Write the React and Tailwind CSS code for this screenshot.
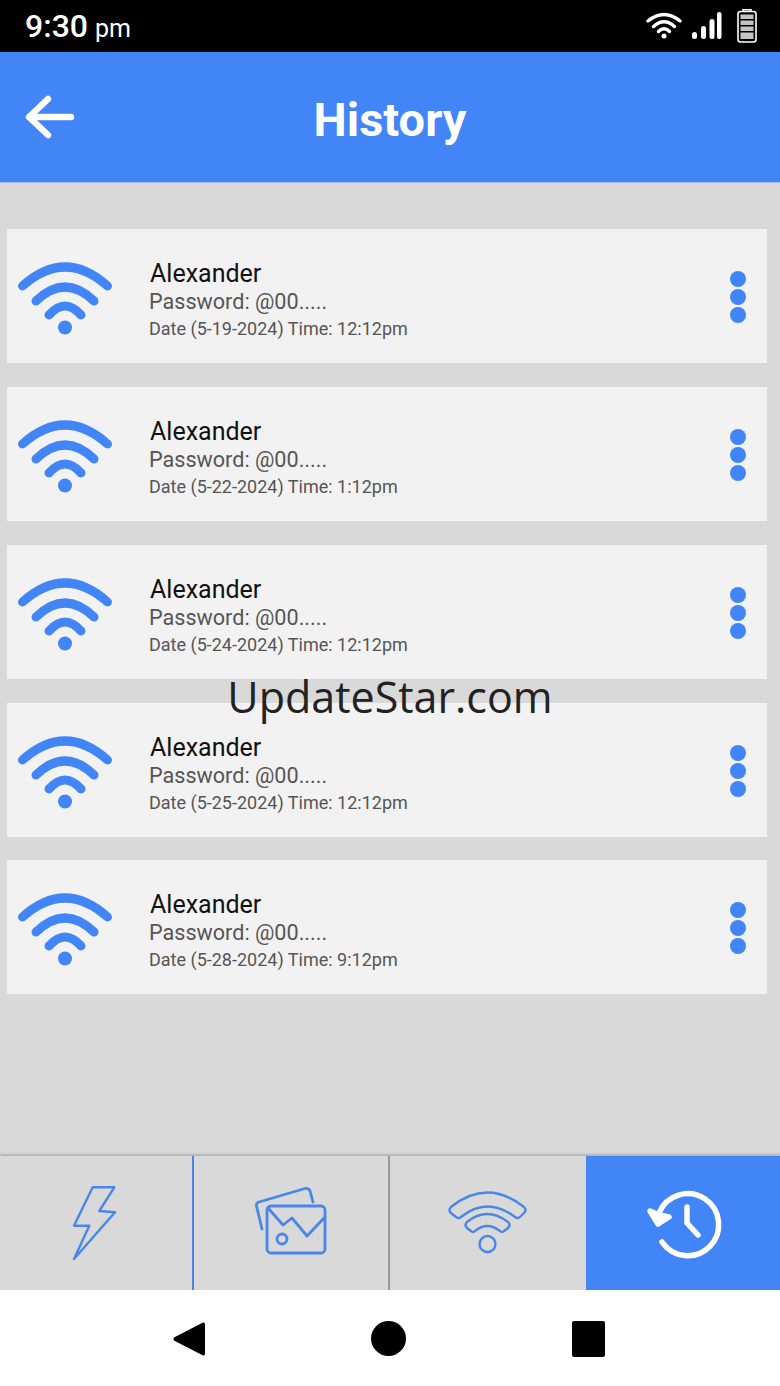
import React from "react";

const rows = [
  { date: "Date (5-19-2024) Time: 12:12pm", m: "mt-[47px]" },
  { date: "Date (5-22-2024) Time: 1:12pm", m: "mt-[24px]" },
  { date: "Date (5-24-2024) Time: 12:12pm", m: "mt-[24px]" },
  { date: "Date (5-25-2024) Time: 12:12pm", m: "mt-[24px]" },
  { date: "Date (5-28-2024) Time: 9:12pm", m: "mt-[23px]" },
];

function WifiSolid() {
  return (
    <svg width="100" height="80" viewBox="0 0 100 80" fill="none" stroke="#4285f6" strokeWidth="9" strokeLinecap="round">
      <path d="M7.5 30Q50 -8 92.5 30" />
      <path d="M21 45Q50 17 79 45" />
      <path d="M34 59Q50 41 66 59" />
      <circle cx="50" cy="71.5" r="7" fill="#4285f6" stroke="none" />
    </svg>
  );
}

function Card({ date, m }) {
  return (
    <div className={`${m} ml-[7px] mr-[13px] h-[134px] bg-[#f3f2f3] flex items-center pl-[8px] pr-[21px]`}>
      <WifiSolid />
      <div className="ml-[34px] mt-[8px] flex-1 flex flex-col font-['Roboto',sans-serif]">
        <div className="text-[25px] leading-[30px] text-[#111111] pl-px">Alexander</div>
        <div className="text-[21.6px] leading-[27px] mt-[-1px] text-[#555555]">Password: @00.....</div>
        <div className="text-[18px] leading-[26px] mt-[1px] text-[#555555]">{date}</div>
      </div>
      <div className="mt-[2px] flex flex-col gap-[2px]">
        <span className="w-[16px] h-[16px] rounded-full bg-[#4285f6]" />
        <span className="w-[16px] h-[16px] rounded-full bg-[#4285f6]" />
        <span className="w-[16px] h-[16px] rounded-full bg-[#4285f6]" />
      </div>
    </div>
  );
}

export default function App() {
  return (
    <div className="relative w-[780px] h-[1386px] flex flex-col bg-[#d9d9d9] overflow-hidden font-['Roboto',sans-serif]">
      <div className="h-[52px] bg-black flex items-center justify-between pl-[25px] pr-[23px] text-white">
        <div className="flex items-baseline gap-[7px] font-medium">
          <span className="text-[32px] leading-none">9:30</span>
          <span className="text-[25px] leading-none font-normal">pm</span>
        </div>
        <div className="flex items-center">
          <svg width="36" height="28" viewBox="0 0 36 28" fill="none" stroke="white" strokeWidth="3.4" strokeLinecap="round" className="mr-[9px] mt-[-2px]">
            <path d="M2 10Q18 -3 34 10" />
            <path d="M7.5 15.5Q18 6 28.5 15.5" />
            <path d="M12.5 20.5Q18 15 23.5 20.5" />
            <circle cx="18" cy="25" r="2.5" fill="white" stroke="none" />
          </svg>
          <svg width="32" height="28" viewBox="0 0 32 28" className="mr-[14px]">
            <rect x="1" y="20" width="5" height="7" rx="2.5" fill="white" />
            <rect x="10" y="14" width="5" height="13" rx="2.5" fill="white" />
            <rect x="18.5" y="7" width="5" height="20" rx="2.5" fill="white" />
            <rect x="26" y="0" width="4.5" height="27" rx="2.2" fill="white" />
          </svg>
          <svg width="20" height="34" viewBox="0 0 20 34" fill="none" stroke="white">
            <path d="M6 2V0.8H14V2" strokeWidth="1.5" />
            <rect x="1" y="2.5" width="18" height="30.5" rx="2.5" strokeWidth="1.6" />
            <rect x="3.5" y="5.5" width="13" height="4.5" fill="#c4c4c4" stroke="none" />
            <rect x="3.5" y="11.5" width="13" height="4.5" fill="#c4c4c4" stroke="none" />
            <rect x="3.5" y="17.5" width="13" height="4.5" fill="#c4c4c4" stroke="none" />
            <rect x="3.5" y="23.5" width="13" height="6.5" fill="#c4c4c4" stroke="none" />
          </svg>
        </div>
      </div>

      <div className="relative h-[130px] bg-[#4285f6] flex items-center justify-center shadow-[0_1px_0_rgba(66,133,246,0.35)]">
        <svg width="50" height="44" viewBox="0 0 50 44" fill="none" stroke="white" strokeWidth="6.5" strokeLinecap="round" strokeLinejoin="round" className="absolute left-[25px] top-[43px]">
          <path d="M46 22H5" />
          <path d="M23 4L4 22L23 40" />
        </svg>
        <span className="mt-[4px] text-[47px] leading-none font-bold text-white">History</span>
      </div>

      {rows.map((r) => (
        <Card key={r.date} date={r.date} m={r.m} />
      ))}

      <div className="flex-1" />

      <div className="h-[134px] flex bg-[#d9d9d9] shadow-[0_-2px_2px_rgba(0,0,0,0.18)]">
        <div className="w-[192px] flex items-center justify-center">
          <svg width="60" height="90" viewBox="0 0 60 90" fill="none" stroke="#4a86e8" strokeWidth="2.4" strokeLinejoin="round">
            <path d="M26.7 9.3H48.3L33.3 33L49 34.3L8 81L23.3 47.7H8Z" />
          </svg>
        </div>
        <div className="w-[2px] bg-[#4a86e8]" />
        <div className="w-[194px] flex items-center justify-center">
          <svg width="90" height="90" viewBox="0 0 90 90" fill="none" stroke="#4a86e8" strokeWidth="2.8" strokeLinecap="round" strokeLinejoin="round">
            <rect x="21" y="28" width="58" height="47" rx="4" />
            <path d="M22 30L37 47L46 40L61 58L79 39" />
            <circle cx="36" cy="61" r="5" />
            <path d="M16 51L10.5 28Q10 25 13 24L59 10.5Q63 10 64 13L67 24" />
          </svg>
        </div>
        <div className="w-[2px] bg-[#9a9a9a]" />
        <div className="w-[196px] flex items-center justify-center">
          <svg width="90" height="90" viewBox="0 0 90 90" fill="none" stroke="#4a86e8" strokeWidth="2.4" strokeLinejoin="round">
            <path d="M8 29Q44 0 81 29Q84 32 81 35L77 39Q75 41 72 39Q44 18 18 39Q15 41 13 39L8 35Q5 32 8 29Z" />
            <path d="M24 44Q44 28 65 44Q68 47 65 50L61 53Q59 55 57 53Q44 43 32 53Q30 55 28 53L24 50Q21 47 24 44Z" />
            <circle cx="44.5" cy="66" r="8" />
          </svg>
        </div>
        <div className="flex-1 bg-[#4285f6] flex items-center justify-center">
          <svg width="90" height="90" viewBox="0 0 90 90" fill="none" stroke="white" strokeWidth="5.5" strokeLinecap="round" strokeLinejoin="round">
            <path d="M24 64A31 31 0 1 0 21 35" />
            <path d="M12 33L20 46L31 39L21 37Z" fill="white" />
            <path d="M49 29V45L60 57" />
          </svg>
        </div>
      </div>

      <div className="h-[96px] bg-white flex items-center justify-center gap-[166px] pr-[2px] pt-[1px]">
        <svg width="32" height="36" viewBox="0 0 32 36">
          <path d="M30 1.5Q32 1 32 3.5V32.5Q32 35 30 34.5L1 19.5Q0 18 1 16.5Z" fill="black" />
        </svg>
        <span className="w-[35px] h-[35px] rounded-full bg-black" />
        <span className="w-[33px] h-[36px] rounded-[2px] bg-black" />
      </div>

      <div className="absolute left-0 right-0 top-[669px] text-center font-['Open_Sans',sans-serif] font-normal text-[43px] leading-[56px] text-[#222222]">
        UpdateStar.com
      </div>
    </div>
  );
}
